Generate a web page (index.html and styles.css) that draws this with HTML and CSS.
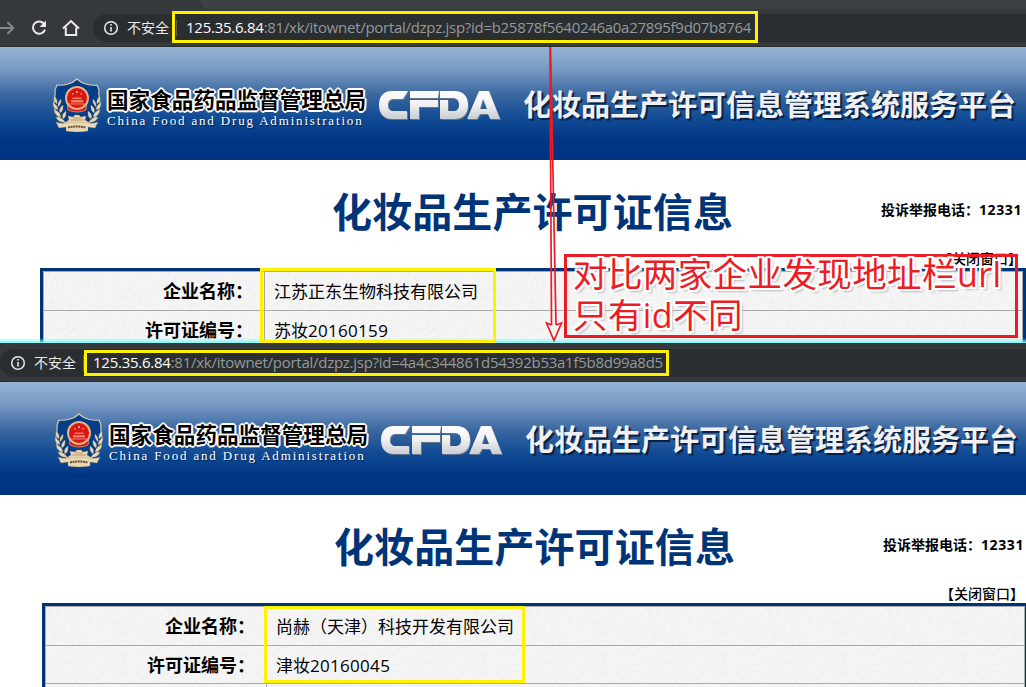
FILE: index.html
```
<!DOCTYPE html>
<html lang="zh-CN">
<head>
<meta charset="utf-8">
<title>化妆品生产许可证信息</title>
<link rel="stylesheet" href="styles.css">
</head>
<body>
<svg class="defs" width="0" height="0" aria-hidden="true">
  <defs>
    <linearGradient id="silver" x1="0" y1="0" x2="0" y2="1"><stop offset="0" stop-color="#fff"/><stop offset=".5" stop-color="#f0f0f2"/><stop offset="1" stop-color="#c9ccd0"/></linearGradient>
    <symbol id="emblem" viewBox="0 0 50 54">
      <path d="M25 1 C20 6 11 8 5 7 L3 12 C4 17 2 20 2 26 C3 38 11 46 25 51 C39 46 47 38 48 26 C48 20 46 17 47 12 L45 7 C39 8 30 6 25 1Z" fill="#063d88" stroke="#d8c9a8" stroke-width="1.2"/>
      <path d="M15 22 L35 22 L34 32 Q30 34 25 34 Q20 34 16 32Z" fill="#d9150f" stroke="#e9b480" stroke-width=".7"/>
      <circle cx="25" cy="20" r="11" fill="#d91611" stroke="#e4b284" stroke-width="2"/>
      <path d="M19 22h12v2.500H19zM21 19.500h8l1 1.500H20zM17 25.500h16v1H17z" fill="#f1806a"/>
      <path d="M24 13h2v2h-2zM20 15h1.500v1.500H20zM28.500 15H30v1.500h-1.500z" fill="#f1a06a"/>
      <g fill="#e8d8b6" stroke="#a98b5a" stroke-width=".3">
        <path id="leaf" d="M2 18q4 3 3 8q-4-3-3-8zM9 21q1 4-3 8q-1-4 3-8zM1 25q5 2 5 7q-5-2-5-7zM11 27q1 5-3 8q-2-4 3-8zM2 32q6 1 7 7q-6-1-7-7zM14 33q1 5-3 8q-2-5 3-8zM4 39q6 0 9 5q-7 1-9-5z"/>
        <use href="#leaf" transform="matrix(-1 0 0 1 50 0)"/>
        <path d="M16 38l5 1 2-2h4l2 2 5-1-1 4 5 3H12l5-3z"/>
        <path d="M4 44q5 2 9 1q12-2 24 0q4 1 9-1l-3 6-7-1v4q-11 2-22 0v-4l-7 1z"/>
      </g>
      <path d="M16 49.500q9-2 18 0" fill="none" stroke="#6b5332" stroke-width="2" stroke-dasharray="2 .6"/>
      <path d="M18 42h14M21 40h8" stroke="#b9965c" stroke-width="1"/>
    </symbol>
    <symbol id="cfda" viewBox="0 0 122 30">
      <g id="cfda-shape">
        <path d="M29 0H13C4 0 0 6 0 14s4 14 13 14h15v-8H15c-4 0-6-2-6-6s2-6 6-6h9z"/>
        <path d="M31 0h29l-1 7H31zM31 9h28v7H40v12h-9z"/>
        <path d="M61 0h14c10 0 14 6 14 14s-4 14-14 14H61V9h8v11h5c4 0 6-2 6-6s-2-7-6-7H61z"/>
        <path fill-rule="evenodd" d="M100 0h10l11 28h-10l-2-5h-8l-3 5H88zM104 8l-3 10h7z"/>
      </g>
    </symbol>
    <symbol id="info" viewBox="0 0 16 16"><circle cx="8" cy="8" r="6.300" fill="none" stroke="currentColor" stroke-width="1.500"/><path d="M8 7v4.500M8 4v1.600" stroke="currentColor" stroke-width="1.600"/></symbol>
  </defs>
</svg>

<section class="capture first">
  <div class="toolbar">
    <div class="tabstrip"></div>
    <div class="controls">
      <svg class="forward" width="16" height="16" viewBox="0 0 16 16"><path d="M0 8h13M7.500 2.200L13.300 8l-5.800 5.800"/></svg>
      <svg class="reload" width="18" height="18" viewBox="0 0 18 18"><path d="M14.200 5A6.200 6.200 0 1 0 15 10.600"/><path class="solid" d="M16 1.500v6.500H9.500z"/></svg>
      <svg class="home" width="18" height="18" viewBox="0 0 18 18"><path d="M1 9.500L9 2l8 7.500M3.800 8.500V16h10.400V8.500"/></svg>
      <div class="address"><svg class="info" width="16" height="16"><use href="#info"/></svg><span class="unsafe">不安全</span><i class="bar"></i><span class="url"><b>125.35.6.84</b>:81/xk/itownet/portal/dzpz.jsp?id=b25878f5640246a0a27895f9d07b8764</span></div>
    </div>
  </div>
  <header class="banner">
    <svg class="emblem" width="50" height="54"><use href="#emblem"/></svg>
    <div class="agency"><div class="agency-cn">国家食品药品监督管理总局</div><div class="agency-en">China Food and Drug Administration</div></div>
    <svg class="cfda" width="122" height="30"><use href="#cfda"/></svg>
    <div class="platform">化妆品生产许可信息管理系统服务平台</div>
  </header>
  <main class="content">
    <div class="heading"><h1>化妆品生产许可证信息</h1><p class="hotline">投诉举报电话：<span>12331</span></p></div>
    <p class="close">【关闭窗口】</p>
    <div class="record">
      <div class="label">企业名称：</div><div class="value">江苏正东生物科技有限公司</div>
      <div class="label">许可证编号：</div><div class="value">苏妆<span>20160159</span></div>
      <div class="label"></div><div class="value"></div>
    </div>
  </main>
</section>

<section class="capture second">
  <div class="toolbar">
    <div class="controls">
      <div class="address"><svg class="info" width="16" height="16"><use href="#info"/></svg><span class="unsafe">不安全</span><i class="bar"></i><span class="url"><b>125.35.6.84</b>:81/xk/itownet/portal/dzpz.jsp?id=4a4c344861d54392b53a1f5b8d99a8d5</span></div>
    </div>
  </div>
  <header class="banner">
    <svg class="emblem" width="50" height="54"><use href="#emblem"/></svg>
    <div class="agency"><div class="agency-cn">国家食品药品监督管理总局</div><div class="agency-en">China Food and Drug Administration</div></div>
    <svg class="cfda" width="122" height="30"><use href="#cfda"/></svg>
    <div class="platform">化妆品生产许可信息管理系统服务平台</div>
  </header>
  <main class="content">
    <div class="heading"><h1>化妆品生产许可证信息</h1><p class="hotline">投诉举报电话：<span>12331</span></p></div>
    <p class="close">【关闭窗口】</p>
    <div class="record">
      <div class="label">企业名称：</div><div class="value">尚赫（天津）科技开发有限公司</div>
      <div class="label">许可证编号：</div><div class="value">津妆<span>20160045</span></div>
      <div class="label"></div><div class="value"></div>
    </div>
  </main>
</section>

<div class="mark url-one"></div>
<div class="mark data-one"></div>
<div class="mark url-two"></div>
<div class="mark data-two"></div>
<svg class="arrow" width="20" height="298" viewBox="0 0 20 298"><path d="M5 3L6.500 281M5.500 3L11 281M6.500 281L1.500 279L9 296.500L16.500 279L11 281"/></svg>
<div class="note"><div>对比两家企业发现地址栏<span>url</span></div><div>只有<span>id</span>不同</div></div>
</body>
</html>
```

FILE: styles.css
```
* { box-sizing: border-box; }
body { margin: 0; width: 1026px; height: 687px; overflow: hidden; position: relative; background: #fff; color: #000; font-family: "Open Sans", "Noto Sans CJK SC", sans-serif; }
p, h1 { margin: 0; }
.defs { position: absolute; }
.capture { overflow: hidden; position: relative; }
.first { height: 343px; }
.second { height: 344px; }
.first::after { content: ""; position: absolute; left: 0; right: 0; bottom: 0; height: 5px; background: linear-gradient(#7ff8f800, #80f5f5); }

.toolbar { height: 47px; background: #35393b; border-bottom: 1px solid #2b2e30; }
.second .toolbar { height: 39px; padding-top: 6px; }
.tabstrip { height: 9px; margin-left: 201px; background: #3d4144; border-bottom-left-radius: 8px; }
.controls { display: flex; align-items: center; color: #e8eaed; }
.first .controls { padding-top: 5px; }
.controls svg { flex: none; fill: none; stroke: currentColor; stroke-width: 2; }
.controls .forward { color: #85898c; margin-right: 14px; }
.reload { margin-right: 14px; }
.reload .solid { fill: currentColor; stroke: none; }
.home { margin-right: 13px; }
.controls .info { stroke: none; }
.address { flex: 1; height: 28px; padding-left: 10px; display: flex; align-items: center; background: #2b2e30; border-radius: 14px 0 0 14px; white-space: nowrap; }
.unsafe { width: 43px; margin-left: 8px; padding-bottom: 2px; font: 14px/20px "Noto Sans CJK SC", sans-serif; }
.bar { width: 1px; height: 16px; margin: 0 9px 0 6px; background: #5f6368; }
.url { padding-bottom: 2px; font-size: 15px; line-height: 20px; color: #929a9d; letter-spacing: -.290px; }
.url b { font-weight: 400; color: #fff; letter-spacing: -.250px; }
.second .url { letter-spacing: -.265px; }

.banner { height: 113px; display: flex; padding-left: 52px; background: linear-gradient(#97b4d5, #7799c4 20%, #38669f 43%, #114b94 63%, #003785 82%, #003482); }
.second .banner { padding-left: 54px; }
.banner > * { flex: none; }
.emblem { margin-top: 31px; }
.agency { width: 277px; margin: 39px 0 0 5px; white-space: nowrap; }
.agency-cn { font: 700 21.600px/26px "Noto Sans CJK SC", sans-serif; color: #000; text-shadow: 1px 1px #fff, -1px -1px #fff, 1px -1px #fff, -1px 1px #fff, 2px 0 #fff, -2px 0 #fff, 0 2px #fff, 0 -2px #fff; }
.agency-en { padding-top: 1px; font: 13px/16px "Liberation Serif", serif; color: #fff; letter-spacing: 1.830px; text-shadow: 1px 1px 1px #002050; }
.cfda { margin: 44px 0 0 -5px; fill: url(#silver); filter: drop-shadow(1px 1px 0 #64758c); }
.platform { margin: 35px 0 0 22px; font: 700 29px/42px "Noto Sans CJK SC", sans-serif; color: #f0f0f0; white-space: nowrap; text-shadow: 2px 2px 1px #061f45; }

.content { padding-left: 40px; }
.second .content { padding-left: 42px; }
.heading { height: 86px; padding: 18px 0 0 292px; display: flex; }
h1 { width: 549px; color: #003478; font: 700 40px/64px "Noto Sans CJK SC", sans-serif; letter-spacing: .100px; white-space: nowrap; }
.hotline { padding-top: 21px; font: 700 14px/20px "Noto Sans CJK SC", sans-serif; white-space: nowrap; }
.hotline span { font-family: "Open Sans", sans-serif; font-weight: 700; line-height: 0; letter-spacing: .600px; }
.close { height: 22px; padding: 2px 0 0 898px; font: 500 14px/20px "Noto Sans CJK SC", sans-serif; white-space: nowrap; }
.record { width: 986px; display: grid; grid-template-columns: 221px 1fr; grid-template-rows: 40px 38px 39px; border: 3px solid #003478; background-color: #f3f3f3; background-image: url("data:image/svg+xml,%3Csvg xmlns='http://www.w3.org/2000/svg' width='120' height='120'%3E%3Cfilter id='n' color-interpolation-filters='sRGB'%3E%3CfeTurbulence type='fractalNoise' baseFrequency='.22' numOctaves='3' stitchTiles='stitch' result='t'/%3E%3CfeDiffuseLighting in='t' surfaceScale='.35' diffuseConstant='1.28' lighting-color='%23f5f5f5'%3E%3CfeDistantLight azimuth='45' elevation='52'/%3E%3C/feDiffuseLighting%3E%3C/filter%3E%3Crect width='120' height='120' opacity='.18' filter='url(%23n)'/%3E%3C/svg%3E"); }
.label, .value { border-left: 1px solid #aaa; border-bottom: 1px solid #aaa; white-space: nowrap; }
.label:nth-child(-n+2), .value:nth-child(-n+2) { border-top: 1px solid #aaa; }
.label { padding-right: 11px; text-align: right; font: 700 18px/37px "Noto Sans CJK SC", sans-serif; }
.value { padding-left: 9px; border-right: 1px solid #aaa; font: 400 17px/37px "Noto Sans CJK SC", sans-serif; }
.value span { font-family: "Open Sans", sans-serif; line-height: 0; letter-spacing: .300px; }

.mark { position: absolute; border: 3px solid #fff200; }
.url-one { left: 172px; top: 11px; width: 586px; height: 32px; }
.data-one { left: 260px; top: 268px; width: 236px; height: 75px; }
.url-two { left: 84px; top: 350px; width: 585px; height: 26px; }
.data-two { left: 264px; top: 606px; width: 261px; height: 77px; }
.arrow { position: absolute; left: 545px; top: 44px; fill: none; stroke: #ed1c24; stroke-width: 1.700; }
.note { position: absolute; left: 564px; top: 254px; width: 454px; height: 84px; padding: 0 0 0 6px; border: 3px solid #ed1c24; color: #ed1c24; font: 400 34.500px/41px "Noto Sans CJK SC", sans-serif; letter-spacing: .400px; white-space: nowrap; text-shadow: 2px 0 #fff, -2px 0 #fff, 0 2px #fff, 0 -2px #fff, 2px 2px #fff, -2px -2px #fff, 2px -2px #fff, -2px 2px #fff, 3px 3px 2px #bbb; }
.note div { height: 41px; }
.note div:first-child { margin-top: -5px; }
.note span { font-family: "Open Sans", sans-serif; font-size: 34px; line-height: 0; }
```
